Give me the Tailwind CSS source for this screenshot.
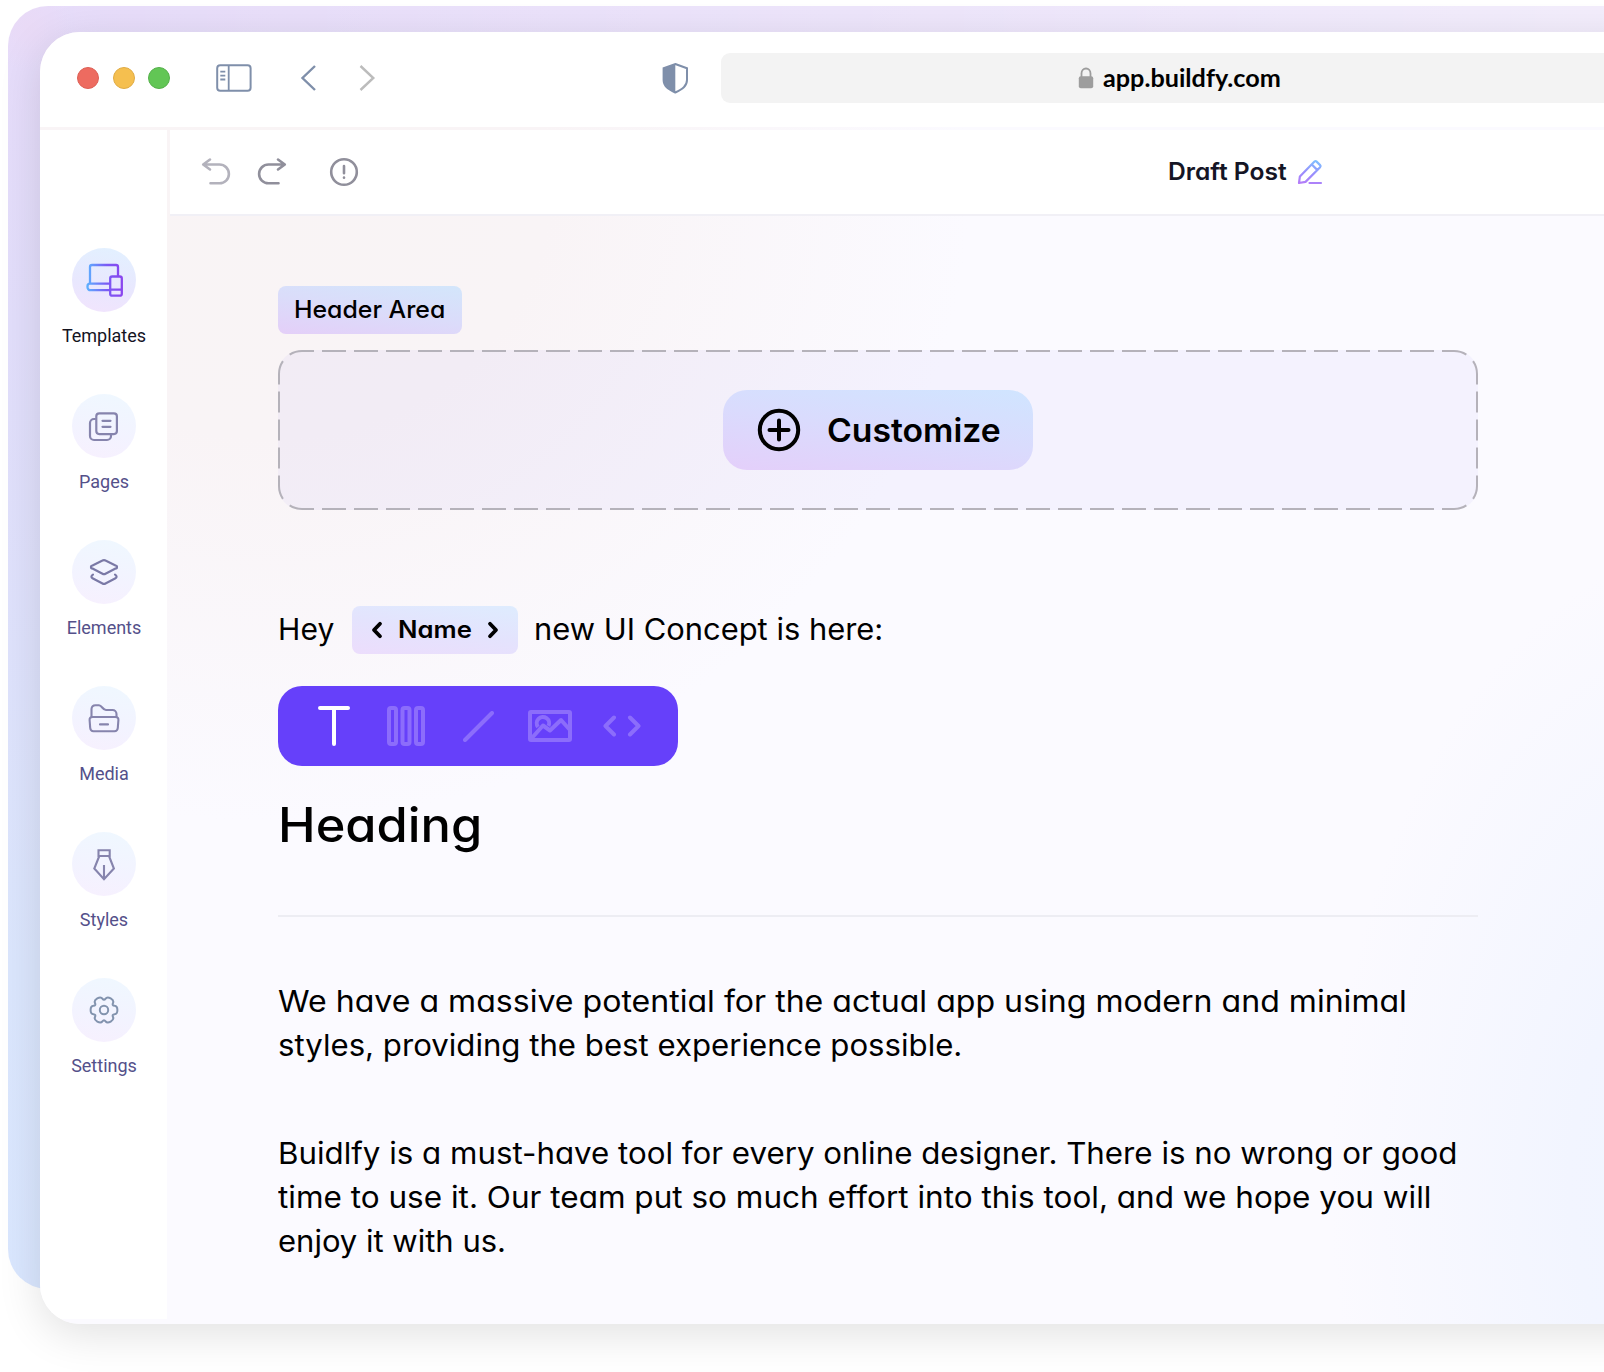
<!DOCTYPE html>
<html lang="en">
<head>
<meta charset="utf-8">
<title>Buildfy – Draft Post</title>
<script src="https://cdn.jsdelivr.net/npm/@tailwindcss/browser@4"></script>
</head>
<body class="w-[1604px] h-[1372px] overflow-hidden bg-white text-black font-[Inter,sans-serif] [font-feature-settings:'cv11']">
<div class="relative w-[1604px] h-[1372px] overflow-hidden pl-10 pt-8">
  <!-- backdrop card -->
  <div class="absolute left-2 top-1.5 w-[1700px] h-[1283px] rounded-[40px] bg-[radial-gradient(circle_at_20px_20px,#e9daf6_0,#e9daf600_45px),linear-gradient(90deg,#ffffff00_0,#ffffff80_1600px),linear-gradient(180deg,#e7dcfa_0%,#e2defb_25%,#dbe6fd_75%,#dae7ff_100%)]"></div>

  <!-- browser window -->
  <div class="relative flex flex-col w-[1700px] h-[1292px] rounded-[40px] overflow-hidden gap-[3px] shadow-[0_10px_44px_rgba(0,0,0,0.12)] bg-[radial-gradient(ellipse_700px_640px_at_230px_150px,#f9f4f5_0%,#f9f4f6_40%,#fbfaff00_100%),radial-gradient(ellipse_400px_640px_at_1690px_1150px,#eff4ff_0%,#f2f5ff_40%,#fbfaff00_100%),linear-gradient(#fbfaff,#fbfaff)]">
    <header class="flex h-[95px] shrink-0 items-center bg-white pl-[37px]">
      <div class="flex gap-[13.700px] mt-[-3px]">
        <span class="size-[22px] rounded-full bg-[#ed6b60] border border-[#dd5f55]"></span>
        <span class="size-[22px] rounded-full bg-[#f5bf4f] border border-[#dfab45]"></span>
        <span class="size-[22px] rounded-full bg-[#62c655] border border-[#55b04a]"></span>
      </div>
      <svg class="ml-[45.600px] mt-[-3px]" width="36" height="28" viewBox="0 0 36 28" fill="none" stroke="#7f8faa" stroke-width="2"><rect x="1.200" y="1.200" width="33.400" height="25.600" rx="3"/><path d="M12.700 1v26M4.300 7.700h5M4.300 11.700h5M4.300 15.500h5" stroke-width="1.800"/></svg>
      <svg class="ml-[48px] mt-[-3px]" width="18" height="28" viewBox="0 0 18 28" fill="none" stroke="#7f8faa" stroke-width="2.400"><path d="M15 2 2.500 14 15 26"/></svg>
      <svg class="ml-[40px] mt-[-3px]" width="18" height="28" viewBox="0 0 18 28" fill="none" stroke="#bcbcbc" stroke-width="2.400"><path d="M2.500 2 15.300 14 2.500 26"/></svg>
      <svg class="ml-[286px] mt-[-3px]" width="27" height="32" viewBox="0 0 27 32" fill="none"><path d="M13.300 2 25 6.300V18c0 6-4.500 9-11.700 12.500C6 27 1.600 24 1.600 18V6.300z" stroke="#7f8faa" stroke-width="2"/><path d="M13.300 2v28.500C6 27 1.600 24 1.600 18V6.300z" fill="#7f8faa"/></svg>
      <div class="ml-[32.400px] mt-[-3px] flex h-[50px] w-[900px] items-center rounded-[9px] bg-[#f3f3f3] pl-[357px]">
        <svg width="16" height="22" viewBox="0 0 16 22"><path d="M3.500 10V6.500a4.500 5 0 0 1 9 0V10" fill="none" stroke="#9d9d9d" stroke-width="1.800"/><rect x="0.800" y="9.300" width="14.400" height="12" rx="2" fill="#9d9d9d"/></svg>
        <span class="ml-[9px] whitespace-nowrap font-[Lato,sans-serif] text-[24px] font-bold leading-[30px] origin-left scale-x-[1.05]">app.buildfy.com</span>
      </div>
    </header>

    <div class="flex grow gap-[3px]">
      <nav class="flex w-[127px] h-[1189px] shrink-0 flex-col items-center gap-[46px] bg-white pt-[118px] pl-px font-[Roboto,sans-serif] text-[18px] leading-[20px] text-[#54508a]">
        <a class="flex h-[100px] flex-col items-center gap-[14px] text-[#14131f]">
          <svg width="64" height="64" viewBox="0 0 64 64" class="shrink-0 rounded-full bg-[linear-gradient(190deg,#e2f1ff,#e9e7fe_60%,#f2e4fd)]" fill="none" stroke="url(#g1)" stroke-width="2.300"><defs><linearGradient id="g1" gradientUnits="userSpaceOnUse" x1="15" y1="0" x2="50" y2="0"><stop offset="0" stop-color="#5db0ff"/><stop offset=".55" stop-color="#7a5cf5"/><stop offset="1" stop-color="#8a45ee"/></linearGradient></defs><path d="M18 35.500V19a2 2 0 0 1 2-2h24a2 2 0 0 1 2 2v9M38 35.700H18a2.500 2.500 0 0 0-2.500 2.500v1a3 3 0 0 0 3 3H38"/><rect x="38.200" y="28.500" width="11.600" height="19.200" rx="2"/><path d="M38.500 41.700h11"/></svg>
          <span class="whitespace-nowrap">Templates</span>
        </a>
        <a class="flex h-[100px] flex-col items-center gap-[14px]">
          <svg width="64" height="64" viewBox="0 0 64 64" class="shrink-0 rounded-full bg-[linear-gradient(190deg,#eff8ff,#f3f3ff_60%,#f7f0fe)]" fill="none" stroke="#8684ad" stroke-width="2.200" stroke-linecap="round"><rect x="24.300" y="19.300" width="20.600" height="20.800" rx="3"/><path d="M23 25h-1a4 4 0 0 0-4 4v13a4 4 0 0 0 4 4h13a4 4 0 0 0 4-4v-1M30.500 26.800h8M30.500 32.800h8"/></svg>
          <span class="whitespace-nowrap">Pages</span>
        </a>
        <a class="flex h-[100px] flex-col items-center gap-[14px]">
          <svg width="64" height="64" viewBox="0 0 64 64" class="shrink-0 rounded-full bg-[linear-gradient(190deg,#eff8ff,#f3f3ff_60%,#f7f0fe)]" fill="none" stroke="#7a79a6" stroke-width="2.200" stroke-linecap="round" stroke-linejoin="round"><path d="M30.500 20.500a3 3 0 0 1 3 0l10 5a1.500 1.500 0 0 1 0 3l-10 5.300a3 3 0 0 1-3 0l-10-5.300a1.500 1.500 0 0 1 0-3zM21 34.700c-2 1.300-2 2.800-.5 3.600l10 5.200a3 3 0 0 0 3 0l10-5.200c1.500-.8 1.500-2.300-.5-3.600"/></svg>
          <span class="whitespace-nowrap">Elements</span>
        </a>
        <a class="flex h-[100px] flex-col items-center gap-[14px]">
          <svg width="64" height="64" viewBox="0 0 64 64" class="shrink-0 rounded-full bg-[linear-gradient(190deg,#eff8ff,#f3f3ff_60%,#f7f0fe)]" fill="none" stroke="#8684ad" stroke-width="2.100" stroke-linecap="round" stroke-linejoin="round"><path d="M19.500 31v-8a4 4 0 0 1 4-3.700h3.500c3 0 3.500 4.700 7 4.700h6.500a4 4 0 0 1 4 4v3"/><path d="M20.500 31h23c2 0 3 1 2.900 3l-.6 8c-.2 2-1.300 3.200-3.300 3.200h-21c-2 0-3.100-1.200-3.300-3.200l-.6-8c-.1-2 .9-3 2.900-3zM28 38.400h8"/></svg>
          <span class="whitespace-nowrap">Media</span>
        </a>
        <a class="flex h-[100px] flex-col items-center gap-[14px]">
          <svg width="64" height="64" viewBox="0 0 64 64" class="shrink-0 rounded-full bg-[linear-gradient(190deg,#eff8ff,#f3f3ff_60%,#f7f0fe)]" fill="none" stroke="#8684ad" stroke-width="2.100"><path d="M26.500 18.200h11.200V24H26.500zM27.300 24l-5 12.500L32 47.300l9.900-10.800L37 24M32 33v14"/></svg>
          <span class="whitespace-nowrap">Styles</span>
        </a>
        <a class="flex h-[100px] flex-col items-center gap-[14px]">
          <svg width="64" height="64" viewBox="-32 -32 64 64" class="shrink-0 rounded-full bg-[linear-gradient(190deg,#eff8ff,#f3f3ff_60%,#f7f0fe)]" fill="none" stroke="#8293ae" stroke-width="2"><path d="M10.590-4.300Q13.390-4.090 13.390 0Q13.390 4.090 10.590 4.300Q7.790 4.500 9.020 7.030Q10.240 9.550 6.700 11.600Q3.150 13.640 1.580 11.320Q0 9-1.580 11.320Q-3.150 13.640-6.700 11.600Q-10.240 9.550-9.020 7.030Q-7.790 4.500-10.590 4.300Q-13.390 4.090-13.390 0Q-13.390-4.090-10.590-4.300Q-7.790-4.500-9.020-7.030Q-10.240-9.550-6.700-11.600Q-3.150-13.640-1.580-11.320Q0-9 1.580-11.320Q3.150-13.640 6.700-11.600Q10.240-9.550 9.020-7.030Q7.790-4.500 10.590-4.300Z"/><circle r="4.200"/></svg>
          <span class="whitespace-nowrap">Settings</span>
        </a>
      </nav>

      <section class="flex grow flex-col">
        <div class="flex h-[86px] shrink-0 items-center border-b-2 border-[#f1f0f6] bg-white pl-[31px]">
          <svg width="30" height="30" viewBox="0 0 30 30" fill="none" stroke="#b3b2bc" stroke-width="2.600" stroke-linecap="round" stroke-linejoin="round"><path d="M9 2.500 2.200 7.500 9 12.500M2.500 7.500h16a9.300 9.300 0 0 1 0 18.800H9.500"/></svg>
          <svg class="ml-[26px]" width="30" height="30" viewBox="0 0 30 30" fill="none" stroke="#908f9b" stroke-width="2.600" stroke-linecap="round" stroke-linejoin="round"><path d="M21 2.500 27.800 7.500 21 12.500M27.500 7.500H11.500a9.300 9.300 0 0 0 0 18.800h10"/></svg>
          <svg class="ml-[42px]" width="30" height="30" viewBox="0 0 30 30" fill="none" stroke="#908f9b" stroke-width="2.600" stroke-linecap="round"><circle cx="15" cy="15" r="12.800"/><path d="M15 9v7.200M15 20.600v.2"/></svg>
          <span class="ml-[809px] w-[119px] whitespace-nowrap text-[24px] font-semibold leading-[30px] origin-left scale-x-[1.025] text-[#151525]">Draft Post</span>
          <svg class="ml-[10px]" width="26" height="26" viewBox="0 0 26 26" fill="none" stroke="url(#g2)" stroke-width="2.200" stroke-linejoin="round" stroke-linecap="round"><defs><linearGradient id="g2" gradientUnits="userSpaceOnUse" x1="16" y1="1" x2="10" y2="26"><stop offset="0" stop-color="#7fc0ff"/><stop offset=".5" stop-color="#978ffd"/><stop offset="1" stop-color="#b57cf8"/></linearGradient></defs><path d="M2 24l.9-6.600L17.500 2.600a1.500 1.500 0 0 1 2.100 0l3.500 3.500a1.500 1.500 0 0 1 0 2.100L8.500 22.900zM14.800 5.500l5.400 5.400M12.500 24h11.500"/></svg>
        </div>

        <main class="flex w-[1308px] flex-col items-start pl-[108px] pt-[70px]">
          <div class="flex h-12 w-[184px] items-center rounded-lg bg-[linear-gradient(188deg,#d3e6fb,#dbdcfa_50%,#e4cff8)] pl-[16px]">
            <span class="whitespace-nowrap text-[24px] font-medium leading-[30px] origin-left scale-x-[1.035]">Header Area</span>
          </div>

          <div class="relative mt-4 flex h-[160px] w-[1200px] items-center justify-center rounded-3xl bg-[#6450f0]/[0.045]">
            <svg class="absolute inset-0" width="1200" height="160" viewBox="0 0 1200 160" fill="none" stroke="#b5b2ba" stroke-width="2"><path d="M24 1H1176M24 159H1176" stroke-dasharray="24 8" stroke-dashoffset="12"/><path d="M1 24V136M1199 24V136" stroke-dasharray="21 7" stroke-dashoffset="10.500"/><path d="M24 1A23 23 0 0 0 1 24" stroke-dasharray="13 9.300 14 40"/><path d="M1176 1A23 23 0 0 1 1199 24" stroke-dasharray="13 9.300 14 40"/><path d="M24 159A23 23 0 0 1 1 136" stroke-dasharray="13 9.300 14 40"/><path d="M1176 159A23 23 0 0 0 1199 136" stroke-dasharray="13 9.300 14 40"/></svg>
            <button class="relative flex h-20 w-[310px] items-center rounded-3xl bg-[linear-gradient(188deg,#d0e5ff,#dadbfd_50%,#e4cffa)] pl-[34px]">
              <svg width="44" height="44" viewBox="0 0 44 44" fill="none" stroke="#000" stroke-width="4" stroke-linecap="round"><circle cx="22" cy="22" r="19.200"/><path d="M22 12.500v19M12.500 22h19"/></svg>
              <span class="ml-[26px] mt-[2px] whitespace-nowrap text-[32.500px] font-semibold leading-[44px] origin-left scale-x-[1.037]">Customize</span>
            </button>
          </div>

          <div class="mt-24 flex h-12 items-center text-[30px] leading-[44px]">
            <span class="mt-[-2px] w-[74px] whitespace-nowrap tracking-[0.2px]">Hey</span>
            <span class="flex h-12 w-[166px] items-center rounded-lg bg-[linear-gradient(188deg,#deecfe,#e4e3fd_50%,#ecddfc)] pl-[19px]">
              <svg width="12" height="18" viewBox="0 0 12 18" fill="none" stroke="#000" stroke-width="3.800" stroke-linecap="round" stroke-linejoin="round"><path d="M9 2.800 3 9l6 6.200"/></svg>
              <span class="ml-[15px] w-[89px] whitespace-nowrap text-[24px] font-semibold leading-[30px] origin-left scale-x-[1.07]">Name</span>
              <svg width="12" height="18" viewBox="0 0 12 18" fill="none" stroke="#000" stroke-width="3.800" stroke-linecap="round" stroke-linejoin="round"><path d="M3 2.800 9 9l-6 6.200"/></svg>
            </span>
            <span class="ml-[16px] mt-[-2px] whitespace-nowrap origin-left scale-x-[1.03]">new UI Concept is here:</span>
          </div>

          <div class="mt-8 flex h-20 w-[400px] items-center rounded-3xl bg-[#6640fa] pl-[40px]">
            <svg width="32" height="40" viewBox="0 0 32 40" fill="none" stroke="#fff" stroke-width="4" stroke-linecap="round"><path d="M2 2h28M16 2v36"/></svg>
            <svg class="ml-[37px]" width="38" height="40" viewBox="0 0 38 40" fill="none" stroke="#8c6dfb" stroke-width="4"><rect x="2" y="2" width="7" height="36" rx="2"/><rect x="15.500" y="2" width="7" height="36" rx="2"/><rect x="29" y="2" width="7" height="36" rx="2"/></svg>
            <svg class="ml-[38px]" width="31" height="31" viewBox="0 0 31 31" fill="none" stroke="#8c6dfb" stroke-width="4" stroke-linecap="round"><path d="M2 29 29 2"/></svg>
            <svg class="ml-[34px]" width="44" height="32" viewBox="0 0 44 32" fill="none" stroke="#8c6dfb" stroke-width="4" stroke-linejoin="round"><rect x="2" y="2" width="40" height="28" rx="1"/><path d="M3 29 15 15.500l7 5L33 10l9 10"/><path d="M10 17a6.200 6.200 0 1 1 10.500-1"/></svg>
            <svg class="ml-[31px]" width="38" height="22" viewBox="0 0 38 22" fill="none" stroke="#8c6dfb" stroke-width="4" stroke-linecap="round" stroke-linejoin="round"><path d="M11 2.500 2.500 11l8.500 8.500M27 2.500l8.500 8.500-8.500 8.500"/></svg>
          </div>

          <h1 class="mt-[29px] whitespace-nowrap text-[48px] font-medium leading-[60px] origin-left scale-x-[1.053]">Heading</h1>
          <div class="mt-[60px] h-0.5 w-[1200px] bg-[#ededf3]"></div>

          <p class="mt-[62px] flex flex-col items-start whitespace-nowrap text-[30px] leading-[44px]">
            <span class="origin-left scale-x-[1.069]">We have a massive potential for the actual app using modern and minimal</span>
            <span class="origin-left scale-x-[1.039]">styles, providing the best experience possible.</span>
          </p>
          <p class="mt-16 flex flex-col items-start whitespace-nowrap text-[30px] leading-[44px]">
            <span class="origin-left scale-x-[1.0425]">Buidlfy is a must-have tool for every online designer. There is no wrong or good</span>
            <span class="origin-left scale-x-[1.05]">time to use it. Our team put so much effort into this tool, and we hope you will</span>
            <span class="origin-left scale-x-[1.033]">enjoy it with us.</span>
          </p>
        </main>
      </section>
    </div>
  </div>
</div>
</body>
</html>
